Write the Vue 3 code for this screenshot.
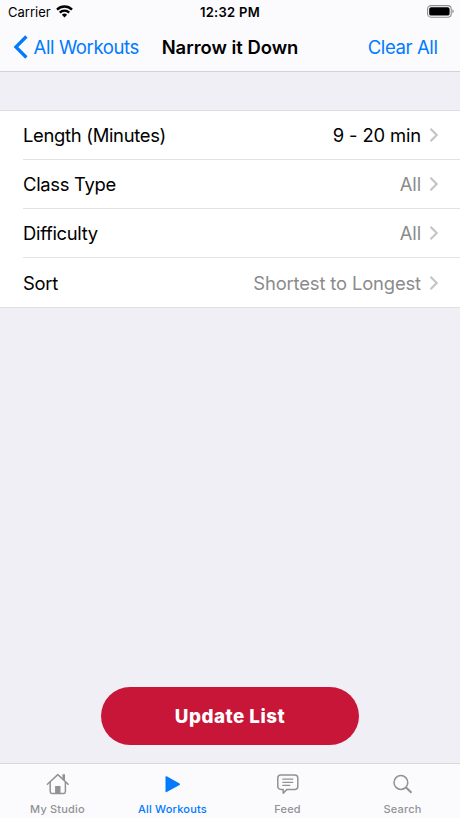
<template>
  <div class="screen">
    <header class="top">
      <div class="status">
        <div class="carrier">
          <span>Carrier</span>
          <svg class="wifi" width="17" height="13" viewBox="0 0 17 13">
            <g fill="none" stroke="#000" stroke-width="2.4">
              <path d="M1 4.6a10.6 10.6 0 0 1 15 0" />
              <path d="M3.8 7.6a6.6 6.6 0 0 1 9.4 0" />
            </g>
            <path d="M8.5 12.4 5.9 9.8a3.7 3.7 0 0 1 5.2 0z" />
          </svg>
        </div>
        <span class="time">12:32 PM</span>
        <svg class="battery" width="28" height="13" viewBox="0 0 28 13">
          <rect x="0.6" y="0.6" width="23.6" height="11.6" rx="3.4" fill="none" stroke="#8e8e90" stroke-width="1.1" />
          <rect x="2.2" y="2.2" width="20.4" height="8.4" rx="1.9" />
          <path d="M25.4 4.3c1.8.7 1.8 3.5 0 4.2z" fill="#8e8e90" />
        </svg>
      </div>
      <nav class="nav">
        <button class="link back">
          <svg width="15" height="24" viewBox="0 0 15 24">
            <path d="M13.4 1.5 2.9 12l10.500 10.500" fill="none" stroke="#007aff" stroke-width="3.200" />
          </svg>
          <span>All Workouts</span>
        </button>
        <h1>Narrow it Down</h1>
        <button class="link clear">Clear All</button>
      </nav>
    </header>

    <main class="content">
      <ul class="filters">
        <li v-for="filter in filters" :key="filter.label">
          <span class="label">{{ filter.label }}</span>
          <span class="value" :class="{ chosen: filter.chosen }">{{ filter.value }}</span>
          <svg class="chevron" width="10" height="16" viewBox="0 0 10 16">
            <path d="M1.5 1.8 7.7 8l-6.2 6.2" fill="none" stroke="#c4c4c7" stroke-width="2.1" />
          </svg>
        </li>
      </ul>
      <button class="update">Update List</button>
    </main>

    <footer class="tabs">
      <button v-for="tab in tabs" :key="tab.id" :class="{ active: tab.id === current }" @click="current = tab.id">
        <svg v-if="tab.id === 'studio'" width="24" height="24" viewBox="0 0 24 24">
          <g fill="none" stroke="currentColor" stroke-width="1.5" stroke-linecap="round" stroke-linejoin="round">
            <path d="M1.4 12.200 11.800 2.600l10.400 9.600" />
            <path d="M4.200 10.200v9.600c0 1 .6 1.600 1.600 1.600h12c1 0 1.600-.6 1.600-1.600v-9.600" />
          </g>
          <path d="M16.400 2.200h2.600v7l-2.600-2.400zM9.100 14h5.400v7.400H9.100z" fill="currentColor" />
        </svg>
        <svg v-else-if="tab.id === 'workouts'" width="24" height="24" viewBox="0 0 24 24">
          <path d="M5.300 5v14.400L18.200 12.200z" fill="currentColor" stroke="currentColor" stroke-width="1.6" stroke-linejoin="round" />
        </svg>
        <svg v-else-if="tab.id === 'feed'" width="24" height="24" viewBox="0 0 24 24">
          <g fill="none" stroke="currentColor" stroke-linecap="round" stroke-linejoin="round">
            <path stroke-width="1.5" d="M4.800 3.100h14c1.800 0 3 1.200 3 3v8.300c0 1.800-1.200 3-3 3H11l-3.800 3.800v-3.800H4.800c-1.800 0-3-1.200-3-3V6.100c0-1.800 1.200-3 3-3z" />
            <path stroke-width="1.2" d="M6.800 7.200h10M6.800 10.300h10M6.800 13.400h7" />
          </g>
        </svg>
        <svg v-else width="24" height="24" viewBox="0 0 24 24">
          <g fill="none" stroke="currentColor">
            <circle cx="9.900" cy="10.500" r="6.900" stroke-width="1.500" />
            <path d="m15 15.500 5.500 5.200" stroke-width="2.100" />
          </g>
        </svg>
        <span>{{ tab.name }}</span>
      </button>
    </footer>
  </div>
</template>

<script setup>
import { ref } from 'vue';

const current = ref('workouts')

const filters = [
  { label: 'Length (Minutes)', value: '9 - 20 min', chosen: true },
  { label: 'Class Type', value: 'All' },
  { label: 'Difficulty', value: 'All' },
  { label: 'Sort', value: 'Shortest to Longest' }
]

const tabs = [
  { id: 'studio', name: 'My Studio' },
  { id: 'workouts', name: 'All Workouts' },
  { id: 'feed', name: 'Feed' },
  { id: 'search', name: 'Search' }
]
</script>

<style>
body {
  margin: 0;
}
</style>

<style scoped>
.screen {
  display: flex;
  flex-direction: column;
  height: 818px;
  background: #f0eff5;
  font-family: Inter, "Liberation Sans", sans-serif;
  color: #000;
}
button {
  border: none;
  padding: 0;
  background: none;
  font-family: inherit;
  cursor: pointer;
}
svg {
  display: block;
  flex-shrink: 0;
}
.top {
  box-sizing: border-box;
  height: 72px;
  background: #fbfbfd;
  border-bottom: 1px solid #d3d3d7;
}
.status {
  display: grid;
  grid-template-columns: 1fr auto 1fr;
  align-items: center;
  height: 24px;
  padding: 0 5px 0 8px;
  font-size: 13px;
}
.carrier {
  display: flex;
  align-items: center;
  gap: 5px;
}
.wifi {
  margin-top: -2px;
}
.time {
  margin-right: 3px;
  font-weight: 600;
  letter-spacing: 0.3px;
}
.battery {
  justify-self: end;
  margin-top: -1px;
}
.nav {
  display: grid;
  grid-template-columns: 1fr auto 1fr;
  align-items: center;
  height: 46px;
  padding: 0 13px;
}
.link {
  color: #007aff;
  font-size: 18.6px;
  line-height: 24px;
  letter-spacing: -0.42px;
  white-space: nowrap;
}
.back {
  display: flex;
  gap: 5.500px;
}
.clear {
  justify-self: end;
  margin-right: 9.500px;
}
h1 {
  margin: 0;
  font-size: 18.4px;
  font-weight: 600;
  line-height: 24px;
}
.content {
  flex: 1;
  display: flex;
  flex-direction: column;
  justify-content: space-between;
  align-items: center;
  padding: 38px 0 18px;
}
.filters {
  box-sizing: border-box;
  width: 100%;
  margin: 0;
  padding: 0 0 0 23px;
  list-style: none;
  background: #fff;
  border-top: 1px solid #dfdfe2;
  border-bottom: 1px solid #dfdfe2;
}
.filters li {
  box-sizing: border-box;
  display: flex;
  align-items: center;
  height: 49px;
  padding-right: 21px;
  border-bottom: 1px solid #e2e2e4;
  font-size: 18.4px;
}
.filters li:last-child {
  border-bottom: none;
}
.label {
  letter-spacing: -0.3px;
}
.value {
  margin-left: auto;
  color: #8b8b8d;
  letter-spacing: -0.14px;
}
.value.chosen {
  color: #000;
}
.chevron {
  margin-left: 8px;
}
.update {
  width: 258px;
  height: 58px;
  border-radius: 29px;
  background: #c81639;
  color: #fff;
  font-size: 18.8px;
  font-weight: 800;
  letter-spacing: 0.5px;
}
.tabs {
  box-sizing: border-box;
  display: grid;
  grid-template-columns: repeat(4, 1fr);
  height: 55px;
  background: #fbfbfd;
  border-top: 1px solid #d7d7dc;
}
.tabs button {
  display: flex;
  flex-direction: column;
  align-items: center;
  padding-top: 8px;
  color: #929294;
  font-size: 11px;
  font-weight: 500;
  line-height: 14px;
  letter-spacing: 0.2px;
}
.tabs svg {
  margin-bottom: 6px;
}
.tabs .active {
  color: #007aff;
}
</style>
